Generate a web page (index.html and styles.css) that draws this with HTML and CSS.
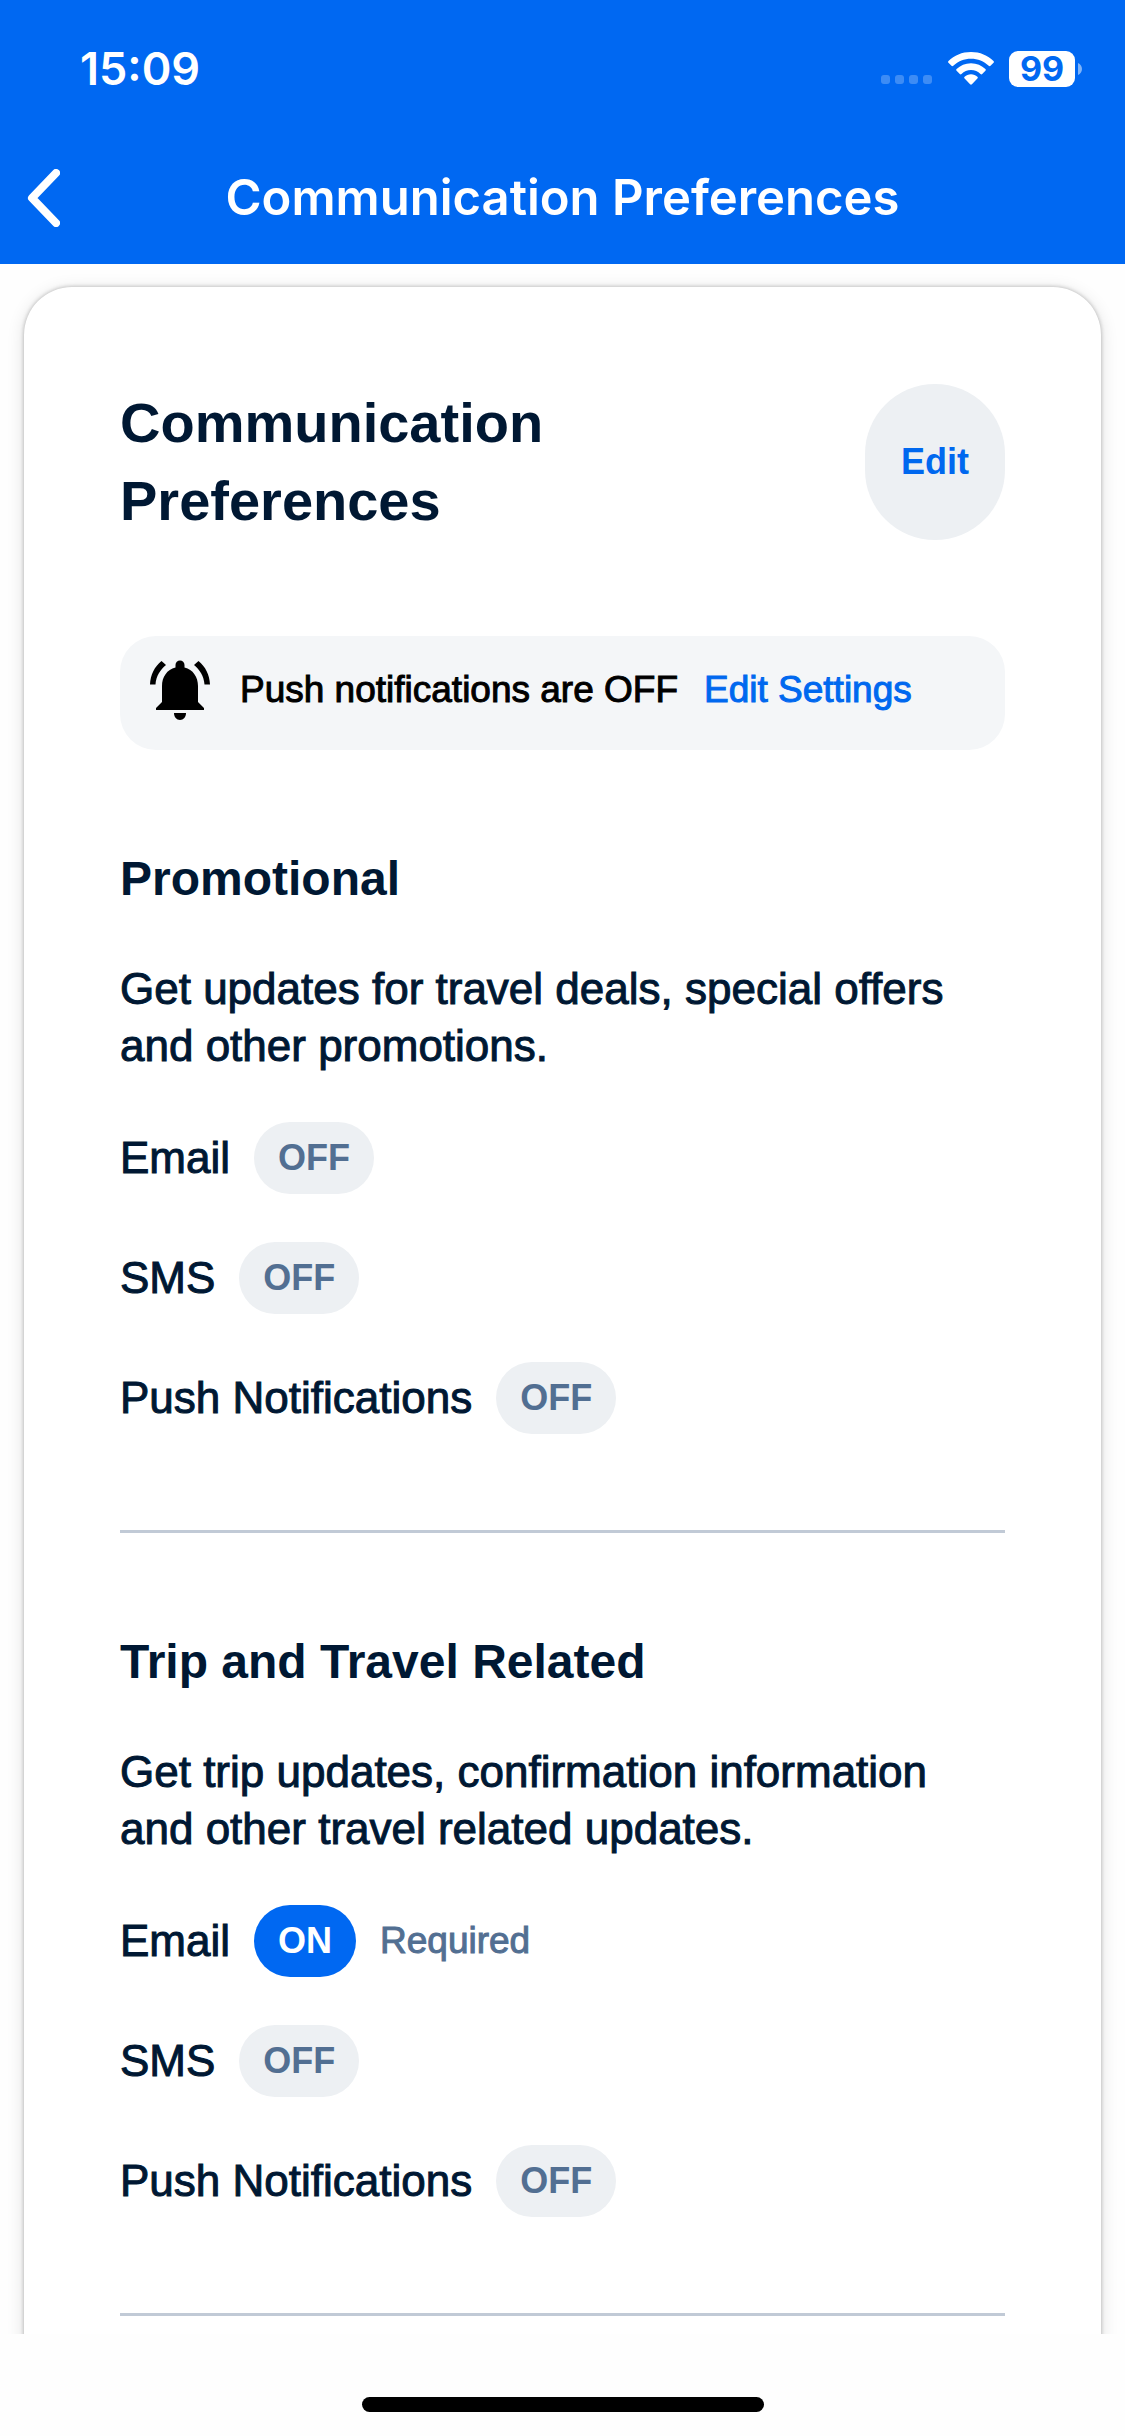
FILE: index.html
```html
<!DOCTYPE html>
<html lang="en">
<head>
<meta charset="utf-8">
<meta name="viewport" content="width=device-width, initial-scale=1">
<title>Communication Preferences</title>
<link rel="stylesheet" href="styles.css">
</head>
<body>
<header class="top">
  <div class="status">
    <time class="clock">15:09</time>
    <div class="indicators">
      <svg class="cell" width="52" height="9" viewBox="0 0 52 9" aria-hidden="true">
        <rect x="0" width="9" height="9" rx="3"/><rect x="14" width="9" height="9" rx="3"/><rect x="28" width="9" height="9" rx="3"/><rect x="42" width="9" height="9" rx="3"/>
      </svg>
      <svg class="wifi" width="46" height="34" viewBox="0 0 46 34" aria-hidden="true">
        <path d="M23 0C32 0 39.800 3.400 45.500 9c.6.6.6 1.200 0 1.800l-3 3c-.6.6-1.200.6-1.800 0C35.900 9.300 29.800 6.800 23 6.800S10.100 9.300 5.300 13.800c-.6.6-1.200.6-1.800 0l-3-3C-.1 10.200-.1 9.600.5 9 6.200 3.400 14 0 23 0Z"/>
        <path d="M23 11.200c5.700 0 10.700 2.200 14.400 5.800.6.6.6 1.200 0 1.800l-3.200 3.200c-.6.6-1.100.6-1.700 0-2.500-2.400-5.800-3.900-9.500-3.900s-7 1.500-9.500 3.900c-.6.6-1.100.6-1.700 0l-3.200-3.200c-.6-.6-.6-1.200 0-1.800 3.700-3.600 8.700-5.800 14.400-5.800Z"/>
        <path d="M23 22.300c2.500 0 4.700.9 6.400 2.400.6.6.6 1.100 0 1.700l-5.500 5.900c-.6.6-1.200.6-1.800 0l-5.500-5.900c-.6-.6-.6-1.100 0-1.700 1.700-1.500 3.900-2.400 6.400-2.400Z"/>
      </svg>
      <div class="battery">
        <span class="charge">99</span>
        <svg width="4" height="12" viewBox="0 0 4 12" aria-hidden="true"><path d="M0 0c2.500 1.200 4 3.400 4 6s-1.500 4.800-4 6Z"/></svg>
      </div>
    </div>
  </div>
  <nav class="bar">
    <button class="back" type="button" aria-label="Back">
      <svg width="33" height="58" viewBox="0 0 33 58" aria-hidden="true"><path d="M29 4 5 29l24 25"/></svg>
    </button>
    <div class="bar-title">Communication Preferences</div>
  </nav>
</header>

<main class="content">
  <article class="card">
    <div class="card-head">
      <h1>Communication Preferences</h1>
      <button class="edit" type="button">Edit</button>
    </div>

    <div class="notice">
      <svg class="bell" width="60" height="60" viewBox="0 0 60 60" aria-hidden="true">
        <path d="M24 53h12c0 4-2.500 7-6 7s-6-3-6-7Z"/>
        <path d="M48 26v16l6 6v2H6v-2l6-6V26c0-9 5-16.500 13.500-18.500V5a4.500 4.500 0 0 1 9 0v2.500C43 9.500 48 17 48 26Z"/>
        <path d="M11.500 1 16 5C10.500 9.500 6 16 5.500 24.500H0C.4 14.800 4.600 6.600 11.500 1ZM48.500 1 44 5c5.500 4.500 10 11 10.500 19.500H60C59.600 14.800 55.400 6.600 48.500 1Z"/>
      </svg>
      <span>Push notifications are OFF</span>
      <a href="#settings">Edit Settings</a>
    </div>

    <section class="group">
      <h2>Promotional</h2>
      <p>Get updates for travel deals, special offers and other promotions.</p>
      <ul class="channels">
        <li>Email <span class="pill">OFF</span></li>
        <li>SMS <span class="pill">OFF</span></li>
        <li>Push Notifications <span class="pill">OFF</span></li>
      </ul>
    </section>
    <section class="group">
      <h2>Trip and Travel Related</h2>
      <p>Get trip updates, confirmation information and other travel related updates.</p>
      <ul class="channels">
        <li>Email <span class="pill on">ON</span> <span class="note">Required</span></li>
        <li>SMS <span class="pill">OFF</span></li>
        <li>Push Notifications <span class="pill">OFF</span></li>
      </ul>
    </section>
  </article>
</main>

<footer class="home"><div class="home-bar"></div></footer>
</body>
</html>
```
FILE: styles.css
```css
* {
  box-sizing: border-box;
}

body {
  display: flex;
  flex-direction: column;
  height: 100vh;
  margin: 0;
  background: #fefefe;
  color: #001833;
  font-family: "Liberation Sans", Arial, sans-serif;
}

h1,
h2,
p,
ul {
  margin: 0;
  padding: 0;
}

button {
  border: 0;
  font: inherit;
}

.top {
  flex: none;
  background: #0068f2;
  color: #fff;
  font-family: Inter, sans-serif;
  font-weight: 600;
}

.status {
  display: flex;
  align-items: center;
  justify-content: space-between;
  height: 138px;
  padding: 0 43px 0 80px;
}

.clock {
  font-size: 45px;
  line-height: 60px;
}

.indicators {
  display: flex;
  align-items: center;
  gap: 15px;
}

.indicators svg {
  fill: #fff;
}

.indicators .cell {
  align-self: flex-end;
  margin-bottom: 3px;
  opacity: .24;
}

.battery {
  display: flex;
  align-items: center;
  gap: 3px;
}

.battery svg {
  opacity: .5;
}

.charge {
  width: 66px;
  border-radius: 9px;
  background: #fff;
  color: #0068f2;
  font-size: 34px;
  font-weight: 700;
  line-height: 36px;
  text-align: center;
}

.bar {
  display: grid;
  grid-template-columns: 88px 1fr 88px;
  align-items: center;
  height: 126px;
  padding-bottom: 6px;
}

.back {
  display: flex;
  padding: 0 0 0 27px;
  background: none;
}

.back svg {
  fill: none;
  stroke: #fff;
  stroke-width: 8;
  stroke-linecap: round;
  stroke-linejoin: round;
}

.bar-title {
  font-size: 49px;
  line-height: 60px;
  text-align: center;
}

.content {
  flex: 1;
  min-height: 0;
  overflow: hidden;
  padding: 23px 24px;
}

.card {
  padding: 97px 96px;
  border-radius: 48px;
  background: #fff;
  box-shadow: 0 0 4px rgba(0, 0, 0, .28), 0 3px 18px rgba(0, 0, 0, .12);
}

.card-head {
  display: flex;
  justify-content: space-between;
  gap: 48px;
  margin-bottom: 96px;
}

h1 {
  max-width: 520px;
  font-size: 56px;
  line-height: 78px;
}

.edit {
  padding: 0 36px;
  border-radius: 78px;
  background: #edf0f3;
  color: #0068ef;
  font-size: 36px;
  font-weight: 700;
}

.notice {
  display: flex;
  align-items: center;
  gap: 26px;
  padding: 24px 30px 30px;
  border-radius: 36px;
  background: #f4f6f8;
  color: #000;
  font-size: 37px;
  line-height: 60px;
  -webkit-text-stroke: 1px;
}

.bell {
  margin-right: 4px;
}

.notice a {
  color: #0068ef;
  text-decoration: none;
}

.group {
  padding: 96px 0;
  border-bottom: 3px solid #c1cad6;
}

h2 {
  margin-bottom: 48px;
  font-size: 48px;
  line-height: 66px;
}

.group p {
  margin-bottom: 48px;
  font-size: 44px;
  line-height: 57px;
  -webkit-text-stroke: 1px;
}

.channels {
  display: grid;
  gap: 48px;
  list-style: none;
}

.channels li {
  display: flex;
  align-items: center;
  gap: 24px;
  font-size: 44px;
  line-height: 72px;
  -webkit-text-stroke: 1px;
}

.pill {
  padding: 0 24px;
  border-radius: 36px;
  background: #edf0f3;
  color: #526f92;
  font-size: 36px;
  font-weight: 700;
  -webkit-text-stroke: 0;
}

.pill.on {
  background: #0068f2;
  color: #fff;
}

.note {
  color: #526f92;
  font-size: 37px;
}

.home {
  display: flex;
  flex: none;
  justify-content: center;
  padding: 63px 0 24px;
}

.home-bar {
  width: 402px;
  height: 15px;
  border-radius: 8px;
  background: #000;
}
```
